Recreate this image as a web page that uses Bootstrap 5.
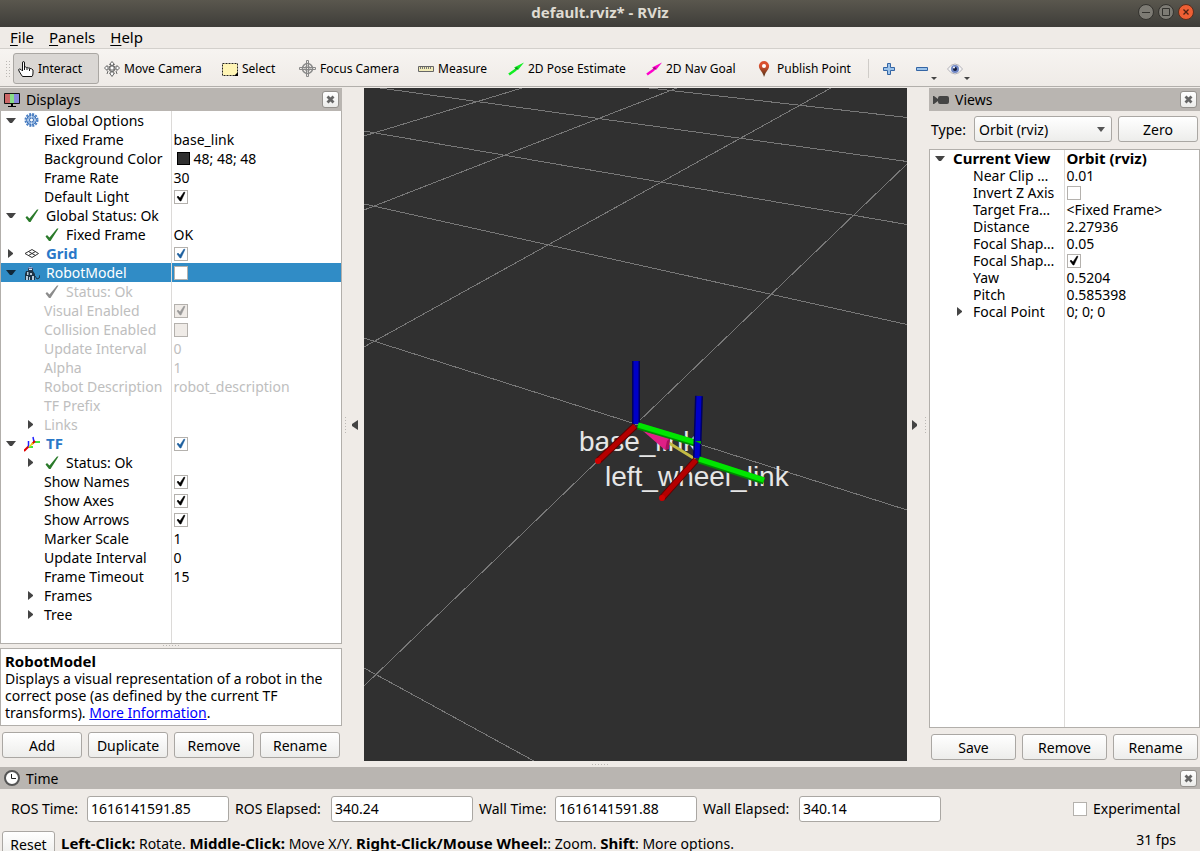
<!DOCTYPE html>
<html lang="en">
<head>
<meta charset="utf-8">
<meta name="viewport" content="width=device-width, initial-scale=1">
<title>default.rviz* - RViz</title>
<link rel="stylesheet" href="https://cdn.jsdelivr.net/npm/bootstrap@5.3.0/dist/css/bootstrap.min.css">
<style>
  :root { --chrome: #efebe7; --edge: #b2afab; --ink: #000; --pick: #308cc6; }
  body { font-family: "Noto Sans", "Open Sans", sans-serif; font-size: 14px; line-height: 17px; color: var(--ink); background: var(--chrome); }
  .app { height: 100vh; }
  svg { display: block; flex: none; }
  b, strong { font-size: 15px; }

  .title-bar { height: 27px; background: linear-gradient(#5a574e, #3e3d39); color: #dfdbd2; font-size: 15px; padding-bottom: 3px; }
  .window-buttons { right: 6px; top: 4px; gap: 4px; }
  .window-buttons button { width: 16px; height: 16px; padding: 0; border: 0; background: none; }

  .menu-bar { height: 22px; padding-left: 10px; gap: 15px; border-bottom: 1px solid #d3d0cc; }
  .menu-bar a { color: inherit; text-decoration: none; padding: 0; font-size: 15px; line-height: 20px; }
  .menu-bar u { text-underline-offset: 2px; }

  .tool-bar { height: 38px; padding: 2px 0 0 5px; background: linear-gradient(#f7f4f1, #efebe7); border-bottom: 1px solid var(--edge); font-size: 12px; }
  .tool { height: 31px; padding: 0 4px; gap: 4px; border: 1px solid transparent; border-radius: 3px; background: none; color: inherit; white-space: nowrap; }
  .tool.active { background: #dad7d4; border-color: #aaa7a3; }
  .tool-1 { width: 86px; } .tool-2 { width: 118px; } .tool-3 { width: 77px; } .tool-4 { width: 119px; }
  .tool-5 { width: 90px; } .tool-6 { width: 138px; } .tool-7 { width: 111px; } .tool-8 { width: 116px; }
  .tool-icon { width: 33px; justify-content: center; position: relative; }
  .tool-icon .drop { position: absolute; right: 0; bottom: 3px; }
  .grip-v { width: 5px; height: 17px; margin-right: 3px; background: radial-gradient(circle, #bbb8b4 35%, transparent 45%) 0 0/3px 3px; }
  .tool-rule { width: 1px; height: 19px; background: #cfccc8; margin-right: 3px; }

  .dock-head { height: 23px; background: #b9b5b1; padding: 0 3px 0 4px; gap: 6px; font-size: 14px; }
  .dock-head.low { height: 22px; }
  .dock-close { width: 17px; height: 17px; padding: 0; border: 1px solid #94918d; border-radius: 3px; background: linear-gradient(#fff, #ececea); }
  .left-dock { width: 342px; }
  .right-dock { width: 271px; }
  .main-area { padding-top: 1px; }

  .tree { border: 1px solid var(--edge); border-top-width: 0; background: #fff; color: #000; }
  .tree table { table-layout: fixed; width: 100%; height: 100%; }
  .tree tr { height: 19px; }
  .tree td { padding: 0; white-space: nowrap; }
  .tree td:first-child { border-right: 1px solid #dcdad8; }
  .tree td + td { padding-left: 2px; }
  .tree tr.rest { height: auto; }
  .tree .name-col { width: 170px; }
  .tight tr { height: 17px; }
  .tight { border-top-width: 1px; }
  .tight .name-col { width: 134px; }
  .node { display: flex; align-items: center; padding-left: 4px; }
  .node.sub { padding-left: 24px; }
  .node .twist { width: 11px; margin-right: 8px; color: #444; }
  .node .ico { width: 16px; margin-right: 6px; }
  .picked .twist { color: #10283a; }
  .picked { background: var(--pick); color: #fff; }
  .off { color: #bebebe; }
  .on-name { color: #2a78c8; font-weight: 700; font-size: 15px; }
  .tight .fw-bold { font-size: 15px; }
  .swatch { width: 13px; height: 13px; border: 1px solid #000; background: #303030; margin: 0 4px 0 3px; }

  .form-check-input[type=checkbox] { width: 14px; height: 14px; margin: 0; float: none; border: 1px solid #b4b1ad; border-radius: 0; background-color: #fff; display: block; flex: none; }
  .form-check-input[type=checkbox]:checked { background-color: #fff; background-size: 12px 12px;
    background-image: url("data:image/svg+xml,%3csvg xmlns='http://www.w3.org/2000/svg' viewBox='0 0 12 12'%3e%3cpath d='M2 6 3 5l2 2 4-6 1 .5L6 10H5z' fill='%23000' stroke='%23000' stroke-width='.5'/%3e%3c/svg%3e"); }
  .form-check-input.blue[type=checkbox]:checked { background-image: url("data:image/svg+xml,%3csvg xmlns='http://www.w3.org/2000/svg' viewBox='0 0 12 12'%3e%3cpath d='M2 6 3 5l2 2 4-6 1 .5L6 10H5z' fill='%231d5f9e' stroke='%231d5f9e' stroke-width='.5'/%3e%3c/svg%3e"); }
  .form-check-input[type=checkbox]:disabled { opacity: 1; background-color: #efebe7; }
  .form-check-input[type=checkbox]:disabled:checked { background-image: url("data:image/svg+xml,%3csvg xmlns='http://www.w3.org/2000/svg' viewBox='0 0 12 12'%3e%3cpath d='M2 6 3 5l2 2 4-6 1 .5L6 10H5z' fill='%23999' stroke='%23999' stroke-width='.5'/%3e%3c/svg%3e"); }

  .grip-h { width: 18px; height: 3px; background: radial-gradient(circle, #bbb8b4 35%, transparent 45%) 0 0/3px 3px; }
  .about { border: 1px solid var(--edge); background: #fff; padding: 4px; margin-top: 1px; }
  .about a { color: #00f; }
  .push { --bs-btn-color: #000; --bs-btn-hover-color: #000; height: 26px; padding: 0; border: 1px solid #aaa7a3; border-radius: 3px; background: linear-gradient(#fff, #ededeb); font-size: 14px; line-height: 17px; flex: 1 1 0; }
  .button-row { gap: 6px; padding: 6px 2px 0; }
  .left-dock .button-row { padding-bottom: 3px; }
  .right-dock .button-row { padding-bottom: 1px; }
  .type-row { padding: 5px 2px 7px; gap: 6px; }
  .type-row .push { flex: none; width: 80px; }
  .type-pick { width: 138px; height: 26px; padding: 0 20px 0 4px; font-size: 14px; line-height: 17px; color: #000; border: 1px solid #aaa7a3; border-radius: 3px;
    background: url("data:image/svg+xml,%3csvg xmlns='http://www.w3.org/2000/svg' viewBox='0 0 8 5'%3e%3cpath d='M0 0h8L4 5z' fill='%23555'/%3e%3c/svg%3e") right 6px center/8px 5px no-repeat, linear-gradient(#fff, #ededeb); }

  .side-strip { width: 22px; padding: 0 2px; gap: 5px; }
  .side-strip .grip-v { width: 3px; height: 18px; margin: 0; }
  .side-strip button { padding: 0; border: 0; background: none; }
  .scene { background: #303030; min-width: 0; }
  .scene text { font-family: "Liberation Sans", Arial, sans-serif; font-size: 28px; fill: #e6e6e6; }

  .gap-strip { height: 6px; }
  .time-row { height: 41px; padding: 0 17px 2px 11px; gap: 6px; }
  .time-row .field { width: 142px; height: 26px; padding: 0 3px; font-size: 14px; border: 1px solid #aaa7a3; border-radius: 3px; color: #000; }
  .lab-time { width: 70px; } .lab-elapsed { width: 90px; } .lab-check { width: 90px; }
  .status { height: 21px; padding: 1px 24px 0 2px; gap: 6px; white-space: nowrap; }
  .status .push { flex: none; width: 53px; }
  .status-tip { padding-top: 4px; }
</style>
</head>
<body class="overflow-hidden">

<svg width="0" height="0" class="position-absolute" aria-hidden="true">
  <defs>
    <symbol id="open" viewBox="0 0 11 11"><path d="M1 3h10L7 8H5z" fill="currentColor"/></symbol>
    <symbol id="shut" viewBox="0 0 11 11"><path d="M3 1v9l5-4V5z" fill="currentColor"/></symbol>
    <symbol id="tick" viewBox="0 0 16 16"><path d="M1.500 9.500L3 8l2.500 2.500L13 1.500h1.500L6.500 14H5z" fill="currentColor"/></symbol>
    <symbol id="cross" viewBox="0 0 9 9"><path d="M1.500 1.500l6 6M7.500 1.500l-6 6" stroke="#666" stroke-width="2.800"/></symbol>
    <symbol id="gear" viewBox="0 0 16 16"><circle cx="7.500" cy="7" r="6" fill="none" stroke="#4a7fc4" stroke-width="2" stroke-dasharray="2 1.140"/><circle cx="7.500" cy="7" r="4.800" fill="#8fb3e0" stroke="#3a6fb6"/><circle cx="7.500" cy="7" r="2" fill="#fff" stroke="#3a6fb6"/><path d="M7.500 2.500v2M7.500 9.500v2M3 7h2M10 7h2" stroke="#dbe7f6"/></symbol>
    <symbol id="grid" viewBox="0 0 16 16"><path d="M1 7.500l7-4 6.500 4-6.500 4zM4.500 5.500l7 4M11.500 5.500l-7 4" fill="none" stroke="#333"/></symbol>
    <symbol id="robot" viewBox="0 0 16 16"><path d="M4 3q2-3 5 0v3H4z" fill="#26384f"/><path d="M4.500 2h4v1.500h-4z" fill="#8fa9dc"/><path d="M5 4h3v1H5z" fill="#e6eef7"/><path d="M2 6h7l2 3v6H1V9z" fill="#1d3346"/><path d="M3 7h1.500v3H3zM2 11h2v4H2zM6 8h2v2H6zM8 11h2v4H8zM5 12h1v3H5z" fill="#b9cbdc"/><path d="M11 11l2 3q3 0 3-4" fill="none" stroke="#1d3346"/></symbol>
    <symbol id="tf" viewBox="0 0 16 16"><path d="M5 10l-5 5" stroke="#e00000" stroke-width="2"/><path d="M4.500 11V5M10 6L9 1" stroke="#2020ff" stroke-width="1.500"/><path d="M5 11h4M10 6h6" stroke="#00e000" stroke-width="1.500"/><path d="M11 5L8 8" stroke="#e00000" stroke-width="2"/><path d="M5 11l4-4" stroke="#e8d800" stroke-width="1.500"/></symbol>
  </defs>
</svg>

<div class="app d-flex flex-column overflow-hidden">

  <header class="title-bar position-relative d-flex align-items-center justify-content-center fw-bold flex-shrink-0">
    <span>default.rviz* - RViz</span>
    <div class="window-buttons position-absolute d-flex">
      <button type="button" aria-label="Minimize"><svg width="16" height="16"><circle cx="8" cy="8" r="7.500" fill="#7d7b74" stroke="#33322e"/><path d="M4 8.500h8" stroke="#33322e"/></svg></button>
      <button type="button" aria-label="Maximize"><svg width="16" height="16"><circle cx="8" cy="8" r="7.500" fill="#7d7b74" stroke="#33322e"/><path d="M4.500 4.500h7v7h-7z" fill="none" stroke="#33322e"/></svg></button>
      <button type="button" aria-label="Close"><svg width="16" height="16"><circle cx="8" cy="8" r="7.500" fill="#ee5f34" stroke="#5a2d1c"/><path d="M5.500 5.500l5 5M10.500 5.500l-5 5" stroke="#4a2112" stroke-width="1.300"/></svg></button>
    </div>
  </header>

  <nav class="menu-bar d-flex flex-shrink-0" aria-label="Menu">
    <a href="#"><u>F</u>ile</a><a href="#"><u>P</u>anels</a><a href="#"><u>H</u>elp</a>
  </nav>

  <div class="tool-bar d-flex align-items-center flex-shrink-0" role="toolbar">
    <div class="grip-v"></div>
    <button type="button" class="tool tool-1 active d-flex align-items-center">
      <svg width="16" height="16" viewBox="0 0 16 16"><path d="M4.500 9V2Q4.500.5 5.500.5T6.500 2v4q1-.5 1.800.5 1.200-.5 1.900.5 1.200-.5 1.800.5 1.500-.2 3 1.500V12q0 2.500-1 3.500H4.500Q3 13.500 1 10q-1-2 .5-2T4.500 10z" fill="#fff" stroke="#111"/><path d="M6.500 6v3M9 7v2M11.500 7.500V10" stroke="#111"/></svg>
      <span>Interact</span></button>
    <button type="button" class="tool tool-2 d-flex align-items-center">
      <svg width="16" height="16" viewBox="0 0 16 16" fill="#fff" stroke="#666"><path d="M8 .5l2.500 3H9V6h4V4.500L15.500 7 13 9.500V8H9v4h1.500L8 15.500 5.500 12H7V8H3v1.500L.5 7 3 4.500V6h4V3.500H5.500z"/><circle cx="8" cy="7.500" r="3" fill="none"/><path d="M4 10l-1 3M12 10l1 3"/></svg>
      <span>Move Camera</span></button>
    <button type="button" class="tool tool-3 d-flex align-items-center">
      <svg width="16" height="16" viewBox="0 0 16 16"><path d="M.5 2.500h15v12H.5z" fill="#fff5b5" stroke="#222" stroke-dasharray="2 1"/><path d="M16 11v4h-4z"/></svg>
      <span>Select</span></button>
    <button type="button" class="tool tool-4 d-flex align-items-center">
      <svg width="17" height="17" viewBox="0 0 17 17" fill="none" stroke="#888"><circle cx="8.500" cy="8.500" r="5" stroke-width="1.500"/><circle cx="8.500" cy="8.500" r="2.500"/><path d="M7.500.5h2v16h-2zM.5 7.500h16v2H.5z"/></svg>
      <span>Focus Camera</span></button>
    <button type="button" class="tool tool-5 d-flex align-items-center">
      <svg width="16" height="16" viewBox="0 0 16 16"><path d="M.5 5.500h15v5H.5z" fill="#f1ebb8" stroke="#666"/><path d="M2.500 6v2M4.500 6v2M6.500 6v2M8.500 6v2M10.500 6v2M12.500 6v2" stroke="#777"/></svg>
      <span>Measure</span></button>
    <button type="button" class="tool tool-6 d-flex align-items-center">
      <svg width="16" height="16" viewBox="0 0 16 16"><path d="M1 13.500l7-5" stroke="#1e2" stroke-width="2.500"/><path d="M6 6.500l10-5L10 9z" fill="#1e2"/><circle cx="8.500" cy="7.500" r="1.300" fill="#0a8a1a"/></svg>
      <span>2D Pose Estimate</span></button>
    <button type="button" class="tool tool-7 d-flex align-items-center">
      <svg width="16" height="16" viewBox="0 0 16 16"><path d="M1 13.500l7-5" stroke="#f0c" stroke-width="2.500"/><path d="M6 6.500l10-5L10 9z" fill="#f0c"/><circle cx="8.500" cy="7.500" r="1.300" fill="#90106e"/></svg>
      <span>2D Nav Goal</span></button>
    <button type="button" class="tool tool-8 d-flex align-items-center">
      <svg width="16" height="16" viewBox="0 0 16 16"><defs><linearGradient id="pin" x2="0" y2="1"><stop offset=".3" stop-color="#d9502e"/><stop offset="1" stop-color="#4a3216"/></linearGradient></defs><path d="M7 16Q6 12 3 8.500 1.500 6 2 4 3.500 0 7 0t5 4q.5 2-1 4.500Q8 12 7 16z" fill="url(#pin)"/><circle cx="7" cy="5" r="2" fill="#fff"/></svg>
      <span>Publish Point</span></button>
    <div class="tool-rule"></div>
    <button type="button" class="tool tool-icon d-flex align-items-center" aria-label="Add tool"><svg width="14" height="14"><path d="M5.500 1.500h3v4h4v3h-4v4h-3v-4h-4v-3h4z" fill="#9cc3ea" stroke="#3465a4"/></svg></button>
    <button type="button" class="tool tool-icon d-flex align-items-center" aria-label="Remove tool"><svg width="14" height="14"><path d="M1.500 5.500h11v3h-11z" fill="#9cc3ea" stroke="#3465a4"/></svg><svg class="drop" width="6" height="3"><path d="M0 0h6L3 3z" fill="#444"/></svg></button>
    <button type="button" class="tool tool-icon d-flex align-items-center" aria-label="Tool visibility"><svg width="16" height="14" viewBox="0 0 16 14"><path d="M.5 7Q4 2 8 2t7.500 5Q12 12 8 12T.5 7z" fill="#f4f4f4" stroke="#b4b2b8"/><circle cx="8" cy="7" r="4" fill="#6f86c4"/><circle cx="8" cy="7" r="2" fill="#111b3a"/><circle cx="7" cy="5.500" r="1" fill="#fff"/></svg><svg class="drop" width="6" height="3"><path d="M0 0h6L3 3z" fill="#444"/></svg></button>
  </div>

  <main class="main-area d-flex flex-grow-1 overflow-hidden">

    <section class="left-dock d-flex flex-column flex-shrink-0">
      <div class="dock-head d-flex align-items-center flex-shrink-0">
        <svg width="16" height="16" viewBox="0 0 16 16"><path d="M.5 1.500h15v10H.5z" fill="#333" stroke="#111"/><path d="M1 2h5v9H1z" fill="#c66"/><path d="M6 2h4v9H6z" fill="#8d8"/><path d="M10 2h5v9h-5z" fill="#88d"/><path d="M7 12h2v2h3v1H4v-1h3z"/></svg>
        <span class="flex-grow-1">Displays</span>
        <button type="button" class="dock-close d-flex align-items-center justify-content-center" aria-label="Close Displays"><svg width="9" height="9"><use href="#cross"/></svg></button>
      </div>
      <div class="tree flex-grow-1">
        <table>
          <colgroup><col class="name-col"><col></colgroup>
          <tbody>
          <tr><td><div class="node"><svg class="twist" width="11" height="11"><use href="#open"/></svg><svg class="ico" width="16" height="16"><use href="#gear"/></svg>Global Options</div></td><td></td></tr>
          <tr><td><div class="node sub"><span class="twist"></span>Fixed Frame</div></td><td>base_link</td></tr>
          <tr><td><div class="node sub"><span class="twist"></span>Background Color</div></td><td><div class="d-flex align-items-center"><span class="swatch"></span>48; 48; 48</div></td></tr>
          <tr><td><div class="node sub"><span class="twist"></span>Frame Rate</div></td><td>30</td></tr>
          <tr><td><div class="node sub"><span class="twist"></span><label for="light">Default Light</label></div></td><td><input class="form-check-input" type="checkbox" id="light" checked></td></tr>
          <tr><td><div class="node"><svg class="twist" width="11" height="11"><use href="#open"/></svg><svg class="ico" width="16" height="16" color="#2a7a2a"><use href="#tick"/></svg>Global Status: Ok</div></td><td></td></tr>
          <tr><td><div class="node sub"><span class="twist"></span><svg class="ico" width="16" height="16" color="#2a7a2a"><use href="#tick"/></svg>Fixed Frame</div></td><td>OK</td></tr>
          <tr><td><div class="node"><svg class="twist" width="11" height="11"><use href="#shut"/></svg><svg class="ico" width="16" height="16"><use href="#grid"/></svg><label class="on-name" for="grid-on">Grid</label></div></td><td><input class="form-check-input blue" type="checkbox" id="grid-on" checked></td></tr>
          <tr class="picked"><td><div class="node"><svg class="twist" width="11" height="11"><use href="#open"/></svg><svg class="ico" width="16" height="16"><use href="#robot"/></svg><label for="robot-on">RobotModel</label></div></td><td><input class="form-check-input" type="checkbox" id="robot-on"></td></tr>
          <tr class="off"><td><div class="node sub"><span class="twist"></span><svg class="ico" width="16" height="16" color="#8c8c8c"><use href="#tick"/></svg>Status: Ok</div></td><td></td></tr>
          <tr class="off"><td><div class="node sub"><span class="twist"></span><span>Visual Enabled</span></div></td><td><input class="form-check-input" type="checkbox" aria-label="Visual Enabled" checked disabled></td></tr>
          <tr class="off"><td><div class="node sub"><span class="twist"></span><span>Collision Enabled</span></div></td><td><input class="form-check-input" type="checkbox" aria-label="Collision Enabled" disabled></td></tr>
          <tr class="off"><td><div class="node sub"><span class="twist"></span>Update Interval</div></td><td>0</td></tr>
          <tr class="off"><td><div class="node sub"><span class="twist"></span>Alpha</div></td><td>1</td></tr>
          <tr class="off"><td><div class="node sub"><span class="twist"></span>Robot Description</div></td><td>robot_description</td></tr>
          <tr class="off"><td><div class="node sub"><span class="twist"></span>TF Prefix</div></td><td></td></tr>
          <tr class="off"><td><div class="node sub"><svg class="twist" width="11" height="11"><use href="#shut"/></svg>Links</div></td><td></td></tr>
          <tr><td><div class="node"><svg class="twist" width="11" height="11"><use href="#open"/></svg><svg class="ico" width="16" height="16"><use href="#tf"/></svg><label class="on-name" for="tf-on">TF</label></div></td><td><input class="form-check-input blue" type="checkbox" id="tf-on" checked></td></tr>
          <tr><td><div class="node sub"><svg class="twist" width="11" height="11"><use href="#shut"/></svg><svg class="ico" width="16" height="16" color="#2a7a2a"><use href="#tick"/></svg>Status: Ok</div></td><td></td></tr>
          <tr><td><div class="node sub"><span class="twist"></span><label for="names">Show Names</label></div></td><td><input class="form-check-input" type="checkbox" id="names" checked></td></tr>
          <tr><td><div class="node sub"><span class="twist"></span><label for="axes">Show Axes</label></div></td><td><input class="form-check-input" type="checkbox" id="axes" checked></td></tr>
          <tr><td><div class="node sub"><span class="twist"></span><label for="arrows">Show Arrows</label></div></td><td><input class="form-check-input" type="checkbox" id="arrows" checked></td></tr>
          <tr><td><div class="node sub"><span class="twist"></span>Marker Scale</div></td><td>1</td></tr>
          <tr><td><div class="node sub"><span class="twist"></span>Update Interval</div></td><td>0</td></tr>
          <tr><td><div class="node sub"><span class="twist"></span>Frame Timeout</div></td><td>15</td></tr>
          <tr><td><div class="node sub"><svg class="twist" width="11" height="11"><use href="#shut"/></svg>Frames</div></td><td></td></tr>
          <tr><td><div class="node sub"><svg class="twist" width="11" height="11"><use href="#shut"/></svg>Tree</div></td><td></td></tr>
          <tr class="rest"><td></td><td></td></tr>
          </tbody>
        </table>
      </div>
      <div class="grip-h align-self-center flex-shrink-0"></div>
      <div class="about flex-shrink-0"><strong>RobotModel</strong><br>Displays a visual representation of a robot in the correct pose (as defined by the current TF transforms). <a href="#">More Information</a>.</div>
      <div class="button-row d-flex flex-shrink-0">
        <button type="button" class="btn push">Add</button><button type="button" class="btn push">Duplicate</button><button type="button" class="btn push">Remove</button><button type="button" class="btn push">Rename</button>
      </div>
    </section>

    <div class="side-strip d-flex align-items-center flex-shrink-0">
      <div class="grip-v"></div>
      <button type="button" aria-label="Hide left panel"><svg width="7" height="10"><path d="M6 0v10L0 6V4z" fill="#444"/></svg></button>
    </div>

    <section class="scene flex-grow-1 overflow-hidden">
      <svg width="100%" height="100%" viewBox="0 0 543 673" preserveAspectRatio="xMidYMid slice">
        <g stroke="#787878" shape-rendering="crispEdges" fill="none">
          <path d="M16 0L543 73.500M285 0L543 29.500M0 43L543 136.500M0 116L543 236.500M0 250L543 422M0 580L170 673"/>
          <path d="M0 48L158 0M0 122L313 0M0 259L467 0M0 598L272 336L543 76"/>
        </g>
        <text x="215" y="363">base_link</text>
        <text x="241" y="398">left_wheel_link</text>
        <g fill="none" stroke-width="7">
          <path d="M331 371L305 355" stroke="#c3bb44" stroke-width="3"/>
          <path d="M279 343l27 7-5 12z" fill="#e01f86"/><path d="M306 350l-1 11-4 1 2-9z" fill="#a80f5f"/>
          <path d="M272 273v63" stroke="#000060" stroke-width="8"/><path d="M272 273v63" stroke="#0000c8" stroke-width="5"/>
          <path d="M274 338l60 18" stroke="#008a00"/><path d="M274 337l60 18" stroke="#00e600" stroke-width="5"/>
          <path d="M271 338l-37 35" stroke="#600000"/><path d="M271 338l-37 35" stroke="#b40000" stroke-width="5"/><circle cx="234" cy="373" r="3" fill="#d00000"/>
          <path d="M335 308l-2 62" stroke="#000060" stroke-width="8"/><path d="M335 308l-2 62" stroke="#0000c8" stroke-width="5"/><path d="M331 353l6 3v-3z" fill="#00a800"/>
          <path d="M335 372l65 21" stroke="#008a00"/><path d="M335 371l65 21" stroke="#00e600" stroke-width="5"/>
          <path d="M332 372l-34 38" stroke="#600000"/><path d="M332 372l-34 38" stroke="#b40000" stroke-width="5"/><circle cx="298" cy="410" r="3" fill="#d00000"/>
        </g>
      </svg>
    </section>

    <div class="side-strip d-flex align-items-center justify-content-end flex-shrink-0">
      <button type="button" aria-label="Hide right panel"><svg width="7" height="10"><path d="M0 0v10l5-4V4z" fill="#444"/></svg></button>
      <div class="grip-v"></div>
    </div>

    <section class="right-dock d-flex flex-column flex-shrink-0">
      <div class="dock-head d-flex align-items-center flex-shrink-0">
        <svg width="16" height="16" viewBox="0 0 16 16"><path d="M0 4h1l4 3V6q0-2 2-2h7q2 0 2 2v4q0 2-2 2H7q-2 0-2-2V9l-4 3H0z" fill="#444"/></svg>
        <span class="flex-grow-1">Views</span>
        <button type="button" class="dock-close d-flex align-items-center justify-content-center" aria-label="Close Views"><svg width="9" height="9"><use href="#cross"/></svg></button>
      </div>
      <div class="type-row d-flex align-items-center flex-shrink-0">
        <label for="view-type" class="flex-grow-1">Type:</label>
        <select id="view-type" class="form-select type-pick flex-shrink-0"><option>Orbit (rviz)</option></select>
        <button type="button" class="btn push">Zero</button>
      </div>
      <div class="tree tight flex-grow-1">
        <table>
          <colgroup><col class="name-col"><col></colgroup>
          <tbody>
          <tr class="fw-bold"><td><div class="node"><svg class="twist" width="11" height="11"><use href="#open"/></svg>Current View</div></td><td>Orbit (rviz)</td></tr>
          <tr><td><div class="node sub"><span class="twist"></span>Near Clip …</div></td><td>0.01</td></tr>
          <tr><td><div class="node sub"><span class="twist"></span><label for="invert">Invert Z Axis</label></div></td><td><input class="form-check-input" type="checkbox" id="invert"></td></tr>
          <tr><td><div class="node sub"><span class="twist"></span>Target Fra…</div></td><td>&lt;Fixed Frame&gt;</td></tr>
          <tr><td><div class="node sub"><span class="twist"></span>Distance</div></td><td>2.27936</td></tr>
          <tr><td><div class="node sub"><span class="twist"></span>Focal Shap…</div></td><td>0.05</td></tr>
          <tr><td><div class="node sub"><span class="twist"></span><label for="shape">Focal Shap…</label></div></td><td><input class="form-check-input" type="checkbox" id="shape" checked></td></tr>
          <tr><td><div class="node sub"><span class="twist"></span>Yaw</div></td><td>0.5204</td></tr>
          <tr><td><div class="node sub"><span class="twist"></span>Pitch</div></td><td>0.585398</td></tr>
          <tr><td><div class="node sub"><svg class="twist" width="11" height="11"><use href="#shut"/></svg>Focal Point</div></td><td>0; 0; 0</td></tr>
          <tr class="rest"><td></td><td></td></tr>
          </tbody>
        </table>
      </div>
      <div class="button-row d-flex flex-shrink-0">
        <button type="button" class="btn push">Save</button><button type="button" class="btn push">Remove</button><button type="button" class="btn push">Rename</button>
      </div>
    </section>
  </main>

  <div class="gap-strip d-flex align-items-center justify-content-center flex-shrink-0"><div class="grip-h"></div></div>

  <section class="flex-shrink-0">
    <div class="dock-head low d-flex align-items-center">
      <svg width="16" height="16" viewBox="0 0 16 16"><circle cx="8" cy="8" r="7" fill="#fff" stroke="#555" stroke-width="2"/><path d="M7.500 4v4.500H12" fill="none" stroke="#222"/></svg>
      <span class="flex-grow-1">Time</span>
      <button type="button" class="dock-close d-flex align-items-center justify-content-center" aria-label="Close Time"><svg width="9" height="9"><use href="#cross"/></svg></button>
    </div>
    <div class="time-row d-flex align-items-center">
      <label for="ros-time" class="lab-time">ROS Time:</label><input id="ros-time" class="field" value="1616141591.85">
      <label for="ros-elapsed" class="lab-elapsed">ROS Elapsed:</label><input id="ros-elapsed" class="field" value="340.24">
      <label for="wall-time" class="lab-time">Wall Time:</label><input id="wall-time" class="field" value="1616141591.88">
      <label for="wall-elapsed" class="lab-elapsed">Wall Elapsed:</label><input id="wall-elapsed" class="field" value="340.14">
      <input class="form-check-input ms-auto" type="checkbox" id="experimental"><label for="experimental" class="lab-check">Experimental</label>
    </div>
  </section>

  <footer class="status d-flex align-items-start flex-shrink-0">
    <button type="button" class="btn push">Reset</button>
    <span class="status-tip"><b>Left-Click:</b> Rotate. <b>Middle-Click:</b> Move X/Y. <b>Right-Click/Mouse Wheel:</b>: Zoom. <b>Shift</b>: More options.</span>
    <span class="ms-auto">31 fps</span>
  </footer>
</div>

<script src="https://cdn.jsdelivr.net/npm/bootstrap@5.3.0/dist/js/bootstrap.bundle.min.js"></script>
</body>
</html>
